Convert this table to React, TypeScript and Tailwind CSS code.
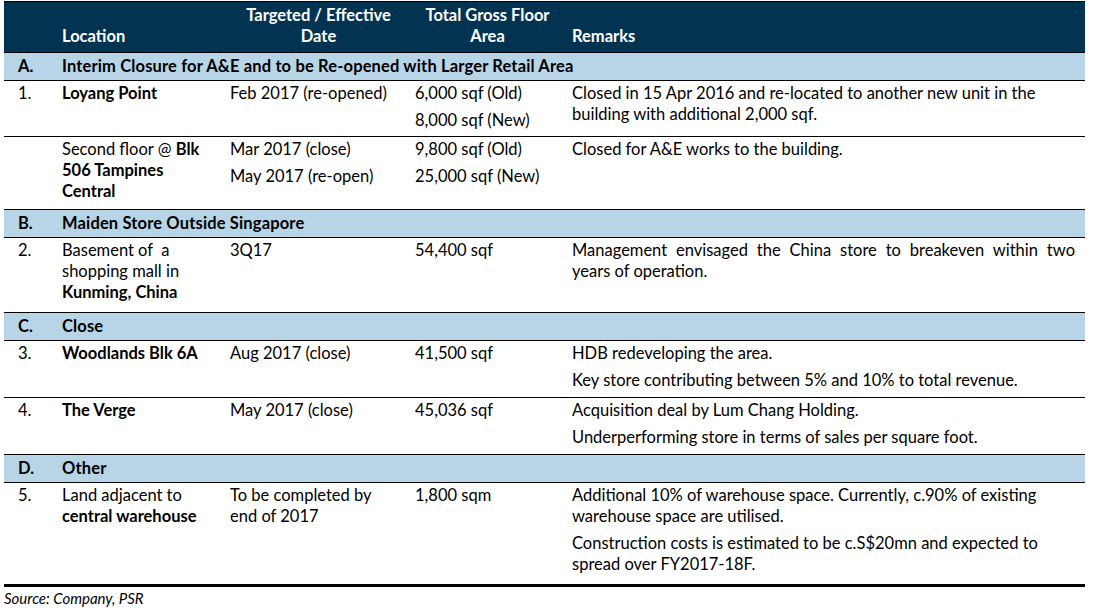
import React from 'react';

type Line = React.ReactNode;
type Para = Line[];

type Row =
  | { kind: 'section'; label: string; title: string }
  | {
      kind: 'item';
      no: string;
      height: string;
      location: Para[];
      date: Para[];
      area: Para[];
      remarks: Para[];
      justifyFirst?: boolean;
    };

const rows: Row[] = [
  { kind: 'section', label: 'A.', title: 'Interim Closure for A&E and to be Re-opened with Larger Retail Area' },
  {
    kind: 'item',
    no: '1.',
    height: 'h-[56px]',
    location: [[<b key="b">Loyang Point</b>]],
    date: [['Feb 2017 (re-opened)']],
    area: [['6,000 sqf (Old)'], ['8,000 sqf (New)']],
    remarks: [['Closed in 15 Apr 2016 and re-located to another new unit in the', 'building with additional 2,000 sqf.']],
  },
  {
    kind: 'item',
    no: '',
    height: 'h-[73px]',
    location: [[<span key="a">Second floor @ <b>Blk</b></span>, <b key="b">506 Tampines</b>, <b key="c">Central</b>]],
    date: [['Mar 2017 (close)'], ['May 2017 (re-open)']],
    area: [['9,800 sqf (Old)'], ['25,000 sqf (New)']],
    remarks: [['Closed for A&E works to the building.']],
  },
  { kind: 'section', label: 'B.', title: 'Maiden Store Outside Singapore' },
  {
    kind: 'item',
    no: '2.',
    height: 'h-[75px]',
    location: [['Basement of  a', 'shopping mall in', <b key="k">Kunming, China</b>]],
    date: [['3Q17']],
    area: [['54,400 sqf']],
    remarks: [['Management envisaged the China store to breakeven within two', 'years of operation.']],
    justifyFirst: true,
  },
  { kind: 'section', label: 'C.', title: 'Close' },
  {
    kind: 'item',
    no: '3.',
    height: 'h-[57px]',
    location: [[<b key="w">Woodlands Blk 6A</b>]],
    date: [['Aug 2017 (close)']],
    area: [['41,500 sqf']],
    remarks: [['HDB redeveloping the area.'], ['Key store contributing between 5% and 10% to total revenue.']],
  },
  {
    kind: 'item',
    no: '4.',
    height: 'h-[57px]',
    location: [[<b key="v">The Verge</b>]],
    date: [['May 2017 (close)']],
    area: [['45,036 sqf']],
    remarks: [['Acquisition deal by Lum Chang Holding.'], ['Underperforming store in terms of sales per square foot.']],
  },
  { kind: 'section', label: 'D.', title: 'Other' },
  {
    kind: 'item',
    no: '5.',
    height: 'h-[102px]',
    location: [['Land adjacent to', <b key="c">central warehouse</b>]],
    date: [['To be completed by', 'end of 2017']],
    area: [['1,800 sqm']],
    remarks: [
      ['Additional 10% of warehouse space. Currently, c.90% of existing', 'warehouse space are utilised.'],
      ['Construction costs is estimated to be c.S$20mn and expected to', 'spread over FY2017-18F.'],
    ],
  },
];

const Cell = ({ paras, className = '', justifyFirst = false }: { paras: Para[]; className?: string; justifyFirst?: boolean }) => (
  <div className={`pt-[2px] ${className}`}>
    {paras.map((p, i) => (
      <div key={i} className="mb-[6px]">
        {p.map((line, j) => (
          <div
            key={j}
            className={`leading-[21px] whitespace-pre ${justifyFirst && j === 0 ? 'text-justify [text-align-last:justify] whitespace-normal' : ''}`}
          >
            {line}
          </div>
        ))}
      </div>
    ))}
  </div>
);

const cols = 'grid grid-cols-[52px_168px_185px_157px_1fr]';

export default function App() {
  return (
    <div className="w-[1095px] h-[616px] bg-white font-['Lato','Liberation_Sans',sans-serif] text-[16.5px] text-black">
      <div className="ml-[4px] w-[1081px] pt-[1px]">
        {/* header */}
        <div className={`${cols} h-[52px] bg-[#023452] border-t border-b border-black text-white font-bold items-end pb-[5px]`}>
          <div />
          <div className="pl-[6px] leading-[21px]">Location</div>
          <div className="text-center leading-[21px] pl-[4px]">Targeted / Effective<br />Date</div>
          <div className="text-center leading-[21px]">Total Gross Floor<br />Area</div>
          <div className="pl-[6px] leading-[21px]">Remarks</div>
        </div>

        {rows.map((r, i) =>
          r.kind === 'section' ? (
            <div key={i} className="flex items-center h-[28px] bg-[#b8d5e7] border-b border-black font-bold">
              <div className="w-[52px] pl-[14px]">{r.label}</div>
              <div className="pl-[6px] tracking-[0.15px]">{r.title}</div>
            </div>
          ) : (
            <div key={i} className={`${cols} ${r.height} border-b border-black`}>
              <Cell paras={[[r.no]]} className="pl-[14px]" />
              <Cell paras={r.location} className="pl-[6px]" />
              <Cell paras={r.date} className="pl-[6px]" />
              <Cell paras={r.area} className="pl-[6px]" />
              <Cell paras={r.remarks} className="pl-[6px] pr-[10px]" justifyFirst={r.justifyFirst} />
            </div>
          )
        )}

        <div className="h-[3px] bg-black -mt-[1px]" />
        <div className="italic text-[15px] leading-[20px] pt-[1px]">Source: Company, PSR</div>
      </div>
    </div>
  );
}
